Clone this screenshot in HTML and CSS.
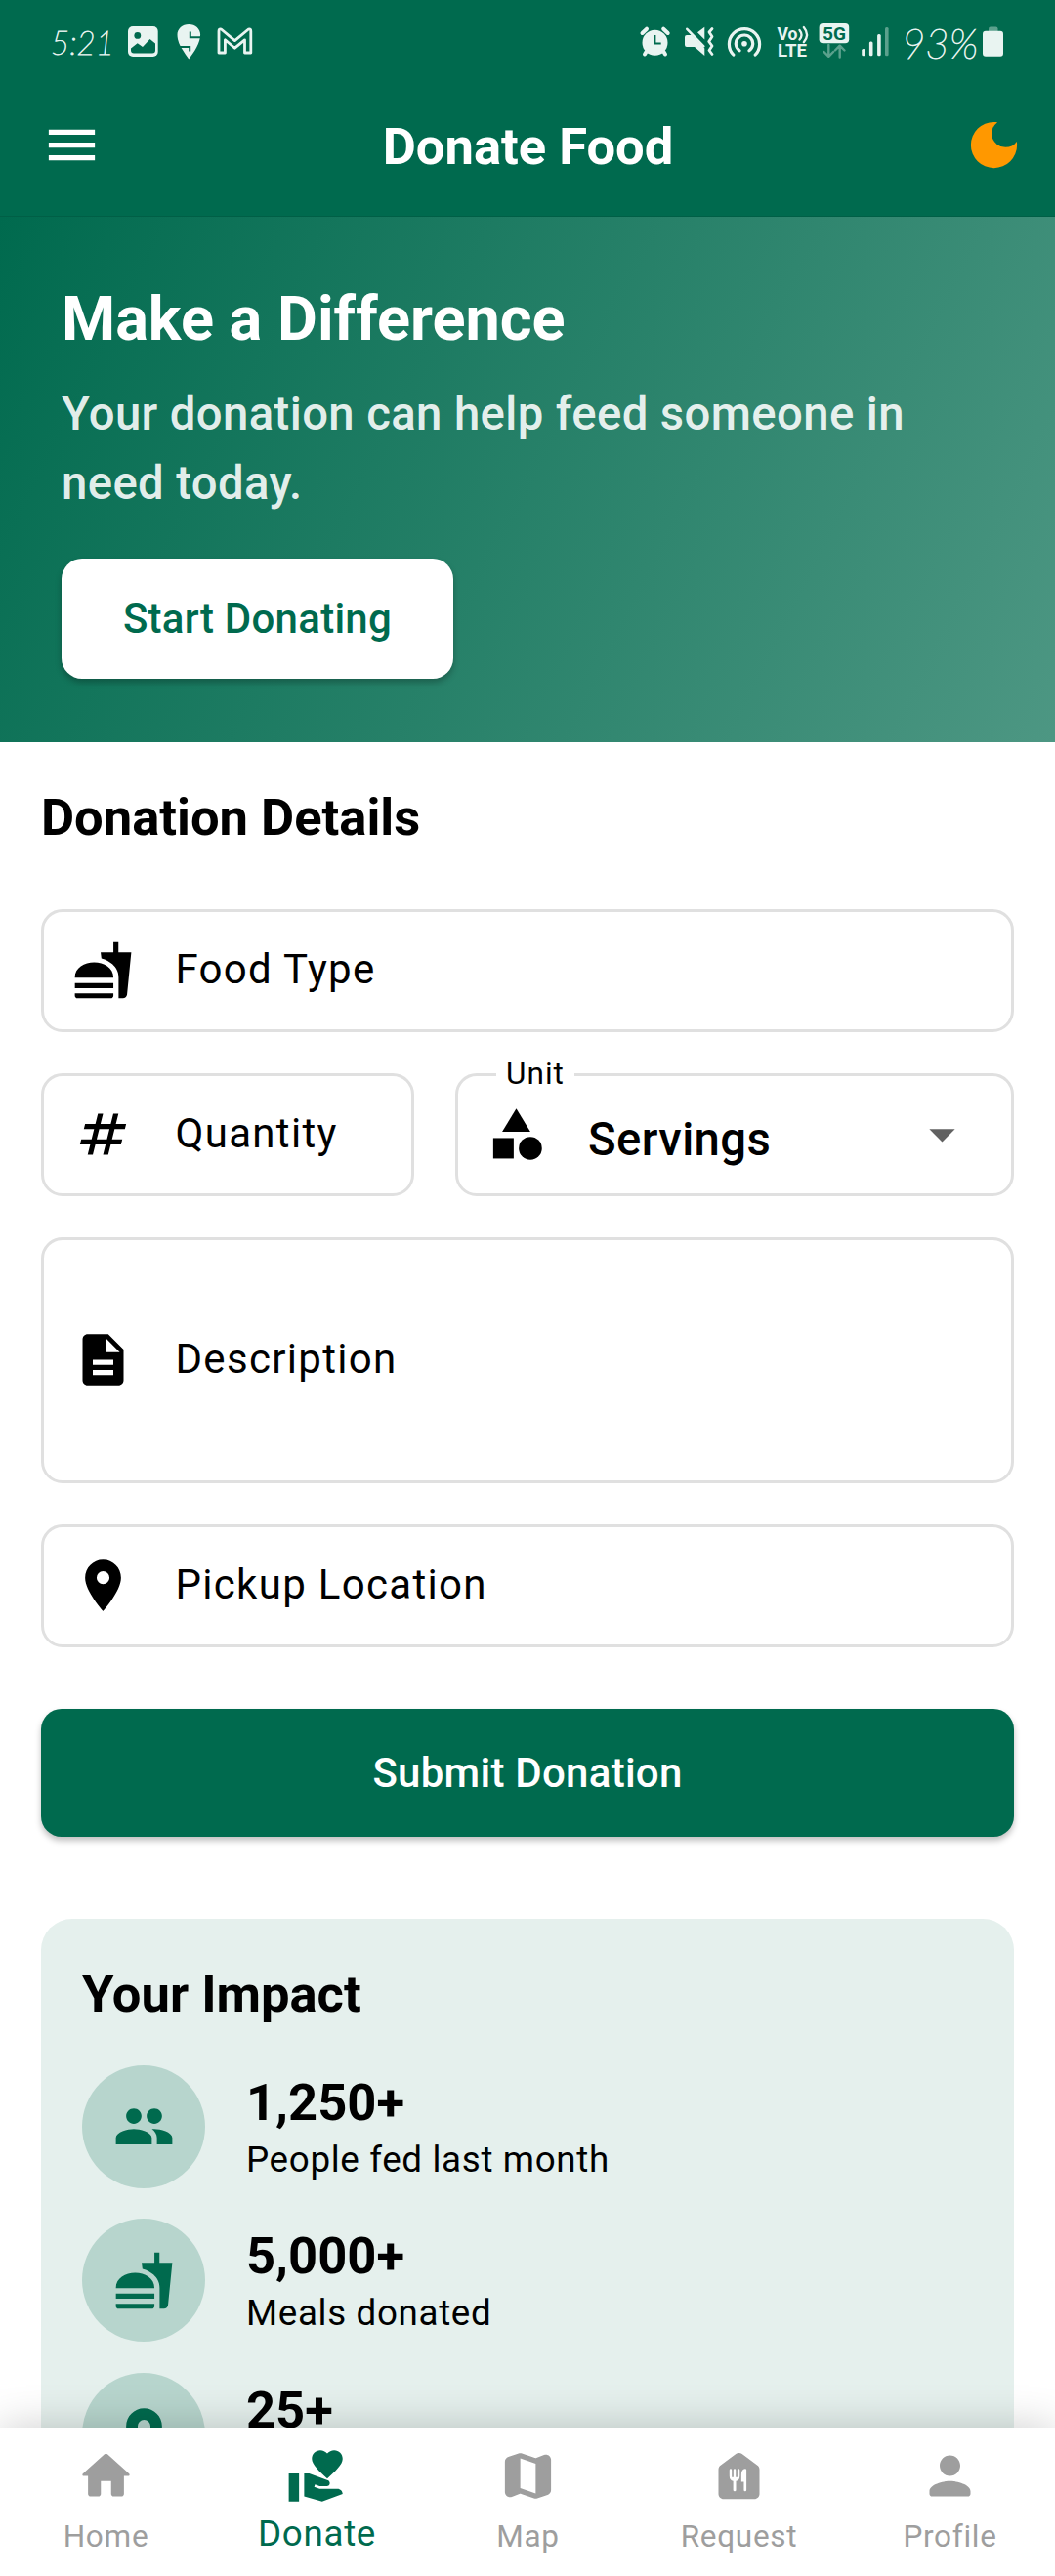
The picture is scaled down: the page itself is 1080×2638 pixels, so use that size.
FILE: index.html
```html
<!DOCTYPE html>
<html lang="en">
<head>
<meta charset="utf-8">
<title>Donate Food</title>
<link rel="stylesheet" href="styles.css">
</head>
<body>
<svg class="defs" aria-hidden="true">
  <symbol id="fastfood" viewBox="0 0 24 24"><path d="M18.06 22.99h1.66c.84 0 1.53-.64 1.63-1.46L23 5.05h-5V1h-1.97v4.05h-4.97l.3 2.34c1.71.47 3.31 1.32 4.27 2.26 1.44 1.42 2.43 2.89 2.43 5.29v8.05zM1 21.99V21h15.03v.99c0 .55-.45 1-1.01 1H2.01c-.56 0-1.01-.45-1.01-1zm15.03-7c0-8-15.03-8-15.03 0h15.03zM1.02 17h15v2h-15z"/></symbol>
  <symbol id="pin" viewBox="0 0 24 24"><path d="M12 2C8.13 2 5 5.13 5 9c0 5.25 7 13 7 13s7-7.75 7-13c0-3.87-3.13-7-7-7zm0 9.5a2.5 2.5 0 0 1 0-5 2.5 2.5 0 0 1 0 5z"/></symbol>
</svg>
<div class="screen">
  <header class="top">
    <div class="status">
      <div class="status-side">
        <span class="clock">5:21</span>
        <svg width="49" height="40" viewBox="122 22 49 40"><rect x="131" y="27" width="30.7" height="31" rx="5"/><circle class="cut" cx="140.8" cy="36.4" r="3.4"/><path class="cut" d="M134 49.5l6.7-5.2 5.3 3.6 7.5-8 5.5 4.6v7q0 3-3 3h-19q-3 0-3-3z"/></svg>
        <svg width="42" height="40" viewBox="171 22 42 40"><path d="M193.3 25c6.8 0 11.8 4.8 11.8 10.5 0 8-6 17.5-11.8 25-2.5-3.2-4.8-6.5-6.7-10-2-3-5.1-9-5.1-15 0-5.7 5-10.5 11.8-10.5z"/><path class="cutline" d="M194.8 32.5v5.7h11.5M182 48h12.2v4.5"/></svg>
        <svg width="55" height="40" viewBox="213 22 55 40"><path class="line" stroke-width="2.8" d="M226.4 30l14 11.6 14-11.6q2.4-.8 2.4 2V54h-6.3V40.8l-10.1 8.4-10-8.4V54h-6.4V32q0-2.8 2.4-2z"/></svg>
      </div>
      <div class="status-side">
        <svg width="45" height="40" viewBox="648 22 45 40"><circle cx="670.5" cy="43.7" r="13"/><path class="line" stroke-width="4" d="M657.5 34l4.5-4.3M679.2 29.7l4.5 4.3M661.5 53l-1.5 2.5M679.5 53l1.5 2.5"/><path class="cutline" stroke-width="2.4" d="M670.4 36v8.5h6.3"/></svg>
        <svg width="45" height="40" viewBox="693 22 45 40"><path d="M714 33.2l7.3-5.4v12.7zM701 38q0-2 2-2h5l13.3 13.5V57L711 48h-8q-2 0-2-2z"/><path class="line" stroke-width="2.6" d="M703.3 29.8l17 17.5"/><path class="line" stroke-width="2.8" d="M729 29.5l-3 3.5 3 4.5-3.3 5 3.3 4.5-3 4.5 3 4"/></svg>
        <svg width="49" height="40" viewBox="738 22 49 40"><circle cx="762" cy="44.8" r="2.8"/><path class="line" stroke-width="3.2" d="M750.8 56a15.6 15.6 0 1 1 22.4 0M757 51.8a8.7 8.7 0 1 1 10 0"/></svg>
        <svg width="46" height="40" viewBox="787 22 46 40"><text x="795.5" y="40.7" font-size="18.5" textLength="21" lengthAdjust="spacingAndGlyphs">Vo</text><path class="line" stroke-width="2.3" d="M818.5 31q4 4.8 0 9.6M822.8 28q6.5 7.6 0 15.2"/><text x="796" y="58" font-size="17.5" textLength="30" lengthAdjust="spacingAndGlyphs">LTE</text></svg>
        <svg width="43" height="40" viewBox="833 22 43 40"><rect x="838.6" y="24" width="30.6" height="20.3" rx="4"/><text class="cut" x="842" y="41.2" font-size="19" textLength="24" lengthAdjust="spacingAndGlyphs">5G</text><path class="line faint" stroke-width="2.4" d="M848.3 46v11.5M843.5 53l4.8 4.8 4.8-4.8M859.7 58.5V47M854.9 51.5l4.8-4.8 4.8 4.8"/></svg>
        <svg width="42" height="40" viewBox="876 22 42 40"><rect x="882.2" y="50" width="3.6" height="7.3" rx="1.5"/><rect x="889.9" y="42.5" width="3.6" height="14.8" rx="1.5"/><rect x="898.1" y="35" width="3.6" height="22.3" rx="1.5"/><rect class="faint-fill" x="906" y="28" width="3.6" height="29.3" rx="1.5"/></svg>
        <span class="percent">93%</span>
        <svg width="27" height="40" viewBox="1003 22 27 40"><path class="faint-fill" d="M1012 32v-2.5q0-2 2-2h5.5q2 0 2 2V32z"/><rect x="1006" y="31.8" width="21" height="26" rx="3"/></svg>
      </div>
    </div>
    <div class="toolbar">
      <svg class="icon" viewBox="0 0 24 24"><path d="M3 18h18v-2H3v2zm0-5h18v-2H3v2zm0-7v2h18V6H3z"/></svg>
      <h1>Donate Food</h1>
      <svg class="icon moon" viewBox="0 0 24 24"><path d="M12 3a9 9 0 1 0 9 9c0-.46-.04-.92-.1-1.36a5.389 5.389 0 0 1-4.4 2.26 5.403 5.403 0 0 1-3.14-9.8c-.44-.06-.9-.1-1.36-.1z"/></svg>
    </div>
  </header>

  <main>
    <section class="hero">
      <h2>Make a Difference</h2>
      <p>Your donation can help feed someone in need today.</p>
      <button class="start">Start Donating</button>
    </section>

    <section class="details">
      <h3>Donation Details</h3>
      <div class="form">
        <div class="field"><svg class="icon" viewBox="0 0 24 24"><use href="#fastfood"/></svg><span>Food Type</span></div>
        <div class="pair">
          <div class="field"><svg class="icon" viewBox="0 0 24 24"><path d="M20.5 10l.5-2h-4l1-4h-2l-1 4h-4l1-4h-2L9 8H5l-.5 2h4l-1 4h-4L3 16h4l-1 4h2l1-4h4l-1 4h2l1-4h4l.5-2h-4l1-4h4zm-7 4h-4l1-4h4l-1 4z"/></svg><span>Quantity</span></div>
          <div class="field">
            <label>Unit</label>
            <svg class="icon" viewBox="0 0 24 24"><path d="M12 2l-5.5 9h11z"/><circle cx="17.5" cy="17.5" r="4.5"/><path d="M3 13.5h8v8H3z"/></svg><span class="value">Servings</span>
            <svg class="icon caret" viewBox="0 0 24 24"><path d="M7 10l5 5 5-5z"/></svg>
          </div>
        </div>
        <div class="field tall"><svg class="icon" viewBox="0 0 24 24"><path d="M14 2H6c-1.1 0-1.99.9-1.99 2L4 20c0 1.1.89 2 1.99 2H18c1.1 0 2-.9 2-2V8l-6-6zm2 16H8v-2h8v2zm0-4H8v-2h8v2zm-3-5V3.5L18.5 9H13z"/></svg><span>Description</span></div>
        <div class="field"><svg class="icon" viewBox="0 0 24 24"><use href="#pin"/></svg><span>Pickup Location</span></div>
      </div>
      <button class="submit">Submit Donation</button>
    </section>

    <section class="impact">
      <h3>Your Impact</h3>
      <ul>
        <li><i class="badge"><svg class="icon" viewBox="0 0 24 24"><path d="M16 11c1.66 0 2.99-1.34 2.99-3S17.66 5 16 5c-1.66 0-3 1.34-3 3s1.34 3 3 3zm-8 0c1.66 0 2.99-1.34 2.99-3S9.66 5 8 5C6.34 5 5 6.34 5 8s1.34 3 3 3zm0 2c-2.33 0-7 1.17-7 3.5V19h14v-2.5c0-2.33-4.67-3.5-7-3.5zm8 0c-.29 0-.62.02-.97.05 1.16.84 1.97 1.97 1.97 3.45V19h6v-2.5c0-2.33-4.67-3.5-7-3.5z"/></svg></i><div><strong>1,250+</strong><small>People fed last month</small></div></li>
        <li><i class="badge"><svg class="icon" viewBox="0 0 24 24"><use href="#fastfood"/></svg></i><div><strong>5,000+</strong><small>Meals donated</small></div></li>
        <li><i class="badge"><svg class="icon" viewBox="0 0 24 24"><use href="#pin"/></svg></i><div><strong>25+</strong></div></li>
      </ul>
    </section>
  </main>

  <nav>
    <a><svg class="icon" viewBox="0 0 24 24"><path d="M10 19v-5h4v5c0 .55.45 1 1 1h3c.55 0 1-.45 1-1v-7h1.7c.46 0 .68-.57.33-.87L12.67 3.6c-.38-.34-.96-.34-1.34 0l-8.36 7.53c-.34.3-.13.87.33.87H5v7c0 .55.45 1 1 1h3c.55 0 1-.45 1-1z"/></svg><span>Home</span></a>
    <a class="active"><svg class="icon" viewBox="0 0 24 24"><path d="M1 11h4v11H1zM16 3.25C16.65 2.49 17.66 2 18.7 2 20.55 2 22 3.45 22 5.3c0 2.27-2.91 4.9-6 7.7-3.09-2.81-6-5.44-6-7.7C10 3.45 11.45 2 13.3 2c1.04 0 2.05.49 2.7 1.25zM20 17h-7l-2.09-.73.33-.94L13 16h2.82c.65 0 1.18-.53 1.18-1.18 0-.49-.31-.93-.77-1.11L8.97 11H7v9.02L14 22l8-3c-.01-1.1-.89-2-2-2z"/></svg><span>Donate</span></a>
    <a><svg class="icon" viewBox="0 0 24 24"><path d="M14.65 4.98l-5-1.75c-.42-.15-.88-.15-1.3-.01L4.36 4.56C3.55 4.84 3 5.6 3 6.46v11.85c0 1.41 1.41 2.37 2.72 1.86l2.93-1.14c.22-.09.47-.09.69-.01l5 1.75c.42.15.88.15 1.3.01l3.99-1.34c.81-.27 1.36-1.04 1.36-1.9V5.69c0-1.41-1.41-2.37-2.72-1.86l-2.93 1.14c-.21.08-.46.09-.69.01zM15 18.89l-6-2.11V5.11l6 2.11v11.67z"/></svg><span>Map</span></a>
    <a><svg class="icon" viewBox="0 0 24 24"><path d="M10.8 3.4L4.8 7.9c-.5.38-.8.97-.8 1.6V19c0 1.1.9 2 2 2h12c1.1 0 2-.9 2-2V9.5c0-.63-.3-1.22-.8-1.6l-6-4.5c-.71-.53-1.69-.53-2.4 0z"/><path class="cutlery" d="M8.3 9.7q0-.5.45-.5t.45.5v2.8h.65V9.7q0-.5.45-.5t.45.5v2.8h.65V9.7q0-.5.45-.5t.45.5V12q0 1.7-1.45 2v3.5q0 .5-.55.5t-.55-.5V14Q8.3 13.7 8.3 12zM14.9 9.6v7.9q0 .5-.5.5t-.5-.5v-3.2h-1V11.5q0-2.1 1.5-2.3.5 0 .5.4z"/></svg><span>Request</span></a>
    <a><svg class="icon" viewBox="0 0 24 24"><path d="M12 12c2.21 0 4-1.79 4-4s-1.79-4-4-4-4 1.79-4 4 1.79 4 4 4zm0 2c-2.67 0-8 1.34-8 4v1c0 .55.45 1 1 1h14c.55 0 1-.45 1-1v-1c0-2.66-5.33-4-8-4z"/></svg><span>Profile</span></a>
  </nav>
</div>
</body>
</html>
```
FILE: styles.css
```css
:root {
  --green: #006a4e;
  --status: #e9f4f1;
}

* { box-sizing: border-box; }

body, h1, h2, h3, p, ul { margin: 0; padding: 0; }

body {
  font-family: Roboto, sans-serif;
  color: #000;
  background: #fff;
}

.defs { display: none; }

.screen {
  display: flex;
  flex-direction: column;
  width: 1080px;
  height: 2638px;
  overflow: hidden;
}

.icon {
  display: block;
  flex: none;
  width: 63px;
  height: 63px;
  fill: currentColor;
}

button {
  display: block;
  padding: 0;
  border: 0;
  border-radius: 21px;
  font: 500 42px Roboto, sans-serif;
  letter-spacing: 0.26px;
}

/* Status bar and toolbar */

.top {
  flex: none;
  height: 222px;
  color: #fff;
  background: var(--green);
  border-bottom: 1px solid #005f46;
}

.status {
  display: flex;
  justify-content: space-between;
  height: 74px;
  padding: 22px 50px 0 52px;
}

.status-side { display: flex; height: 40px; }

.status svg { display: block; fill: var(--status); }
.status text { font-family: Roboto, sans-serif; font-weight: 700; }
.status .cut { fill: var(--green); }
.status .line {
  fill: none;
  stroke: var(--status);
  stroke-linecap: round;
  stroke-linejoin: round;
}
.status .cutline { fill: none; stroke: var(--green); stroke-width: 2; }
.status .faint { stroke: #5ba18d; }
.status .faint-fill { fill: #5ba18d; }

.clock, .percent {
  font-family: Lato, sans-serif;
  font-style: italic;
  font-weight: 100;
  color: var(--status);
  -webkit-text-stroke: 0.9px var(--status);
  white-space: nowrap;
}

.clock { width: 70px; font-size: 33px; line-height: 43px; }
.percent { width: 85px; padding-left: 5px; font-size: 42px; line-height: 45px; }

.toolbar {
  display: flex;
  align-items: center;
  justify-content: space-between;
  height: 147px;
  padding: 2px 31px 0 42px;
}

.toolbar h1 {
  margin-left: -10px;
  padding-top: 2px;
  font-size: 52.5px;
  line-height: 74px;
}

.moon { color: #ff9800; }

/* Scrolling content */

main { flex: 1; min-height: 0; overflow: hidden; }

.hero {
  height: 538px;
  padding: 63px 63px 62px;
  background: linear-gradient(116.5deg, #006a4e, #4d9783);
  color: #fff;
}

.hero h2 { font-size: 63px; line-height: 84px; }

.hero p {
  width: 900px;
  margin: 20px 0 41px;
  color: rgba(255, 255, 255, 0.9);
  font-weight: 500;
  font-size: 47.25px;
  line-height: 70.9px;
  letter-spacing: 0.39px;
}

.start {
  width: 401px;
  height: 123px;
  padding-top: 1px;
  color: var(--green);
  background: #fff;
  box-shadow: 0 4px 6px rgba(0, 0, 0, 0.25);
}

h3 { font-size: 52.5px; line-height: 73.5px; }

.details { padding: 41px 42px 0; }

.form {
  display: flex;
  flex-direction: column;
  gap: 42px;
  margin-top: 56px;
}

.pair { display: grid; grid-template-columns: 381.6px 572.4px; gap: 42px; }

.field {
  position: relative;
  display: flex;
  align-items: center;
  gap: 43px;
  height: 126px;
  padding: 0 39px 0 28.5px;
  border: 3px solid #e0e0e0;
  border-radius: 22px;
  font-size: 42px;
  letter-spacing: 1.31px;
}

.field > span { padding-bottom: 3px; }

.field.tall { height: 252px; }

.field label {
  position: absolute;
  top: -24px;
  left: 39.5px;
  padding: 0 10px;
  background: #fff;
  font-size: 31.5px;
  line-height: 44px;
  letter-spacing: 0.98px;
}

.field .value {
  margin-left: -1px;
  padding: 10px 0 0;
  font-weight: 500;
  font-size: 47.25px;
  letter-spacing: 0.39px;
}

.caret { margin-left: auto; color: #616161; }

.submit {
  width: 996px;
  height: 131px;
  margin-top: 63px;
  color: #fff;
  background: var(--green);
  box-shadow: 0 4px 6px rgba(0, 0, 0, 0.25);
}

.impact {
  height: 700px;
  margin: 84px 42px 0;
  padding: 41.5px 42px;
  border-radius: 32px;
  background: #e5f0ed;
}

.impact ul {
  display: flex;
  flex-direction: column;
  gap: 31.5px;
  margin-top: 35px;
  list-style: none;
}

.impact li { display: flex; gap: 42px; height: 126px; }

.badge {
  display: grid;
  place-items: center;
  width: 126px;
  height: 126px;
  border-radius: 50%;
  color: var(--green);
  background: #b7d5cd;
}

.impact strong, .impact small { display: block; }
.impact strong { padding-top: 7px; font-size: 52.5px; line-height: 62px; }
.impact small { padding-top: 1px; font-size: 36.75px; line-height: 53px; letter-spacing: 0.66px; }

/* Bottom navigation */

nav {
  position: relative;
  display: grid;
  grid-template-columns: repeat(5, 1fr);
  flex: none;
  height: 152px;
  padding-top: 18px;
  background: #fff;
  box-shadow: 0 0 42px rgba(0, 0, 0, 0.2);
}

nav a {
  display: flex;
  flex-direction: column;
  align-items: center;
  color: #9e9e9e;
  font-size: 31.5px;
  line-height: 62px;
  letter-spacing: 0.72px;
}

nav span { padding-left: 1px; }

nav .active { color: var(--green); font-size: 36.75px; line-height: 56px; }

.cutlery { fill: #fff; }
```
